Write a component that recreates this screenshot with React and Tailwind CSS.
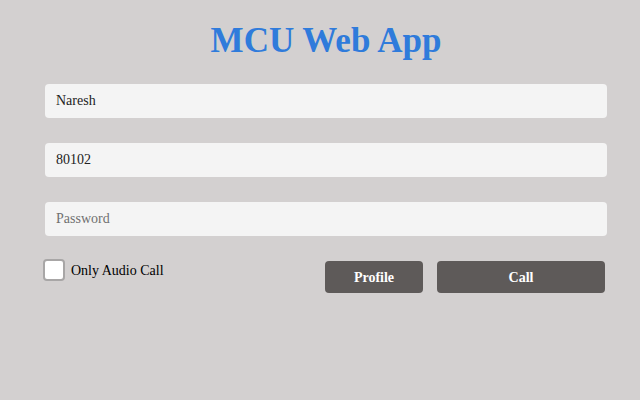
import React, { useState } from 'react';

export default function App() {
  const [name, setName] = useState('Naresh');
  const [ext, setExt] = useState('80102');
  const [password, setPassword] = useState('');
  const [audioOnly, setAudioOnly] = useState(false);

  return (
    <div className="w-[640px] h-[400px] bg-[#d3d0d0] overflow-hidden font-['Liberation_Serif','Times_New_Roman',serif]">
      <div className="ml-[45px] w-[562px]">
        <h1 className="pt-[20px] text-center text-[35px] leading-[42px] font-bold text-[#2f7bdb] font-['Liberation_Serif','Times_New_Roman',serif]">
          MCU Web App
        </h1>

        <div className="mt-[22px] flex flex-col gap-[25px]">
          <input
            value={name}
            onChange={(e) => setName(e.target.value)}
            className="h-[34px] rounded-[4px] bg-[#f4f4f4] px-[11px] text-[14px] text-[#222] outline-none font-['Liberation_Serif','Times_New_Roman',serif]"
          />
          <input
            value={ext}
            onChange={(e) => setExt(e.target.value)}
            className="h-[34px] rounded-[4px] bg-[#f4f4f4] px-[11px] text-[14px] text-[#222] outline-none font-['Liberation_Serif','Times_New_Roman',serif]"
          />
          <input
            type="password"
            value={password}
            onChange={(e) => setPassword(e.target.value)}
            placeholder="Password"
            className="h-[34px] rounded-[4px] bg-[#f4f4f4] px-[11px] text-[14px] text-[#222] placeholder:text-[#707070] outline-none font-['Liberation_Serif','Times_New_Roman',serif]"
          />
        </div>
      </div>

      <div className="ml-[43px] w-[562px] mt-[23px] flex items-start justify-between">
        <label className="flex items-center gap-[6px] text-[14px] text-black cursor-pointer font-['Liberation_Serif','Times_New_Roman',serif]">
          <span
            className={`w-[22px] h-[22px] rounded-[4px] border-2 border-[#a8a6a6] ${audioOnly ? 'bg-[#2f7bdb]' : 'bg-white'}`}
            onClick={() => setAudioOnly(!audioOnly)}
          />
          Only Audio Call
        </label>
        <div className="flex gap-[14px] pt-[2px]">
          <button className="w-[98px] h-[32px] rounded-[4px] bg-[#5e5a59] text-white text-[14px] font-bold font-['Liberation_Serif','Times_New_Roman',serif]">
            Profile
          </button>
          <button className="w-[168px] h-[32px] rounded-[4px] bg-[#5e5a59] text-white text-[14px] font-bold font-['Liberation_Serif','Times_New_Roman',serif]">
            Call
          </button>
        </div>
      </div>
    </div>
  );
}
